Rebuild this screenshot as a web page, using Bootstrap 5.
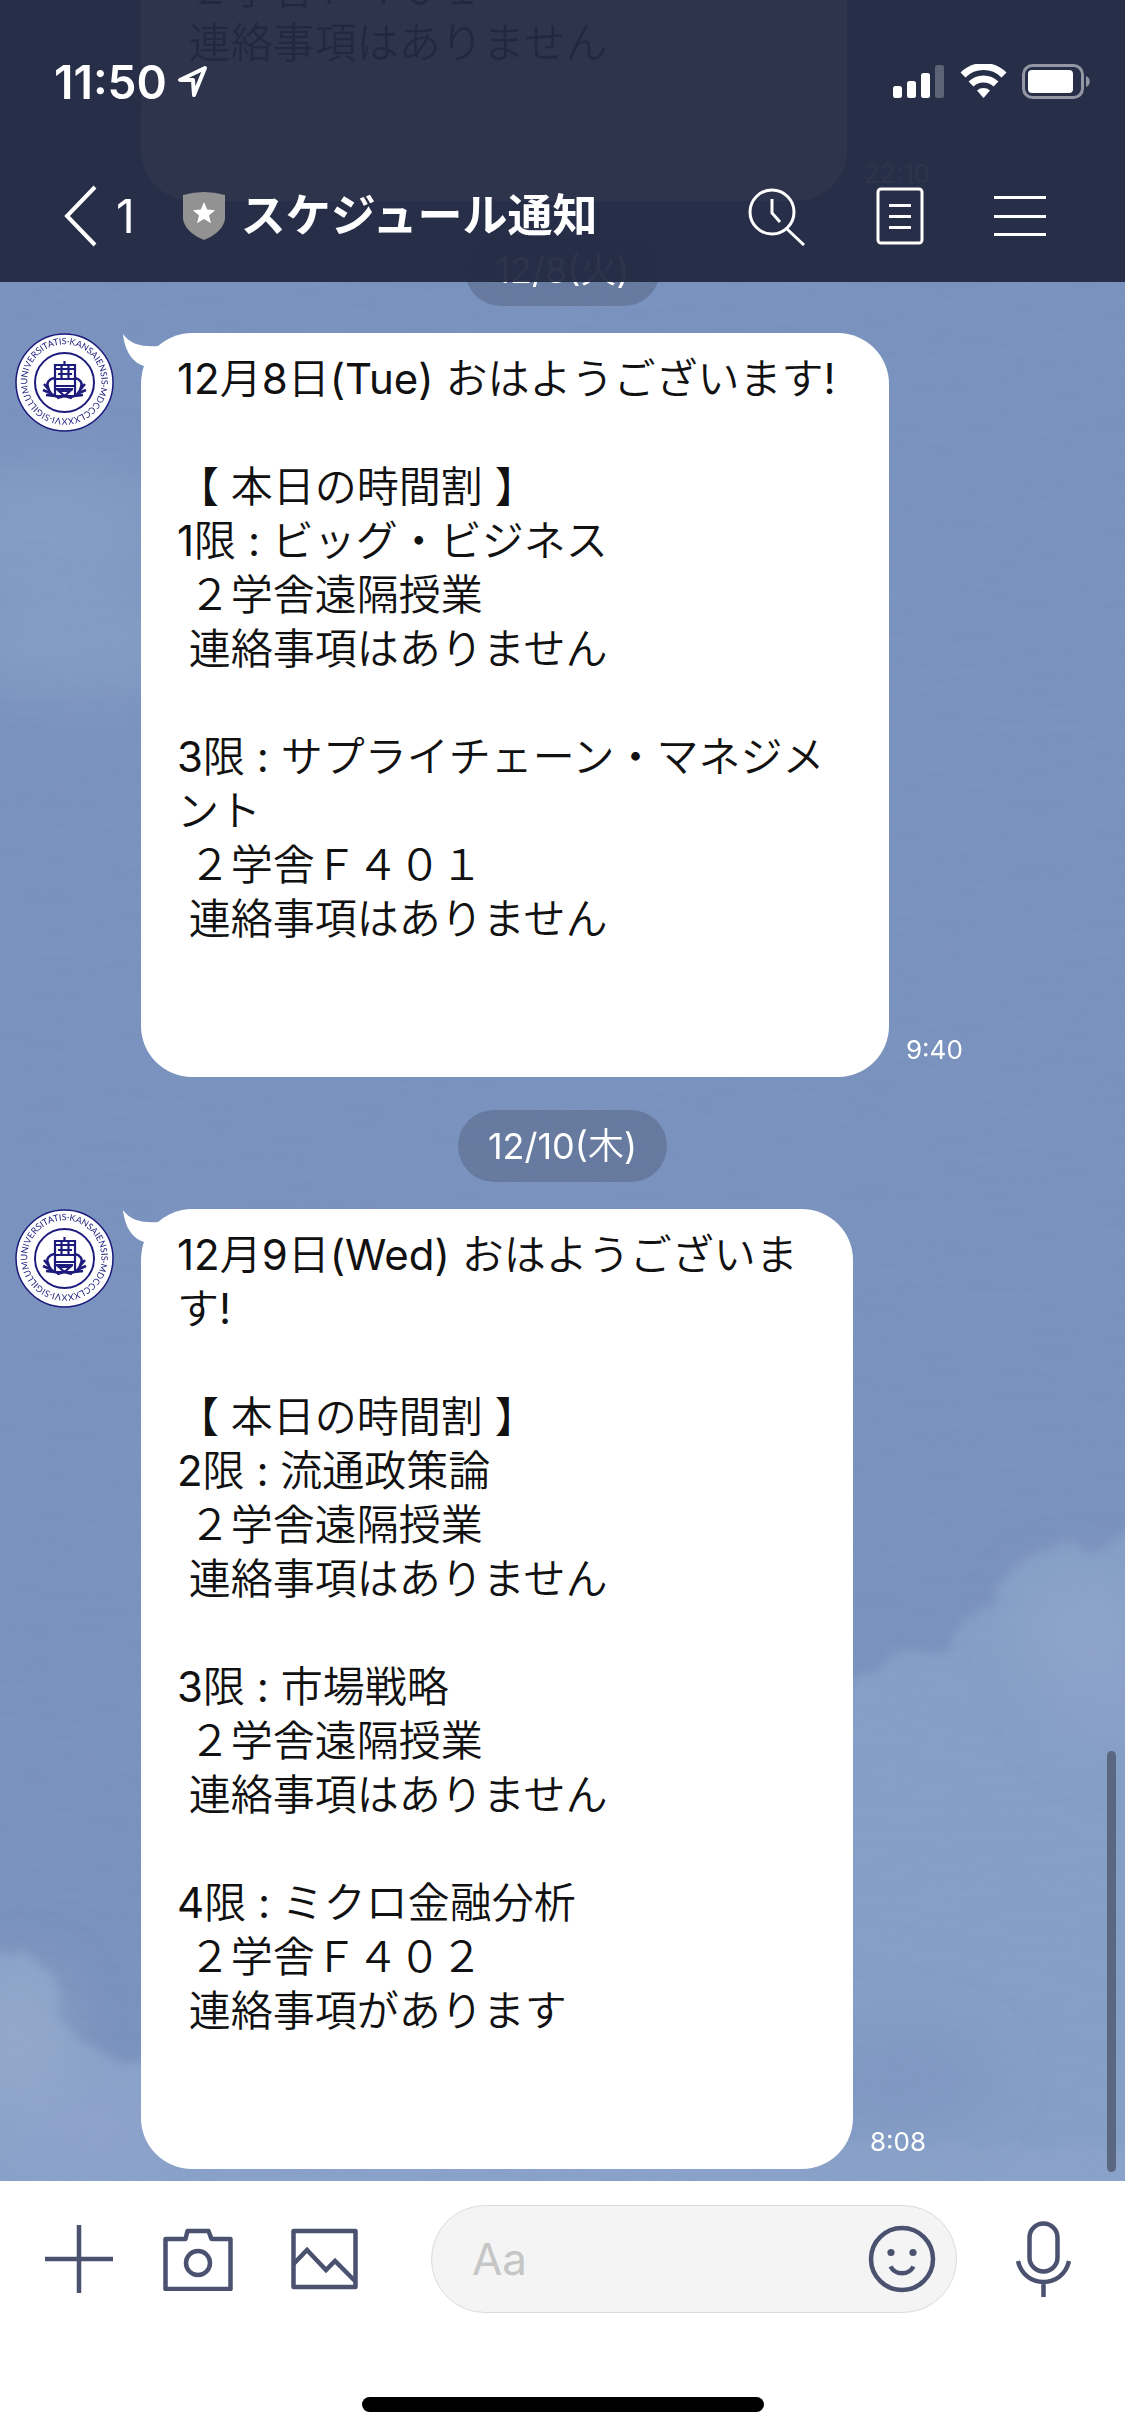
<!DOCTYPE html>
<html lang="ja">
<head>
<meta charset="utf-8">
<meta name="viewport" content="width=device-width, initial-scale=1">
<title>スケジュール通知</title>
<link href="https://cdn.jsdelivr.net/npm/bootstrap@5.3.0/dist/css/bootstrap.min.css" rel="stylesheet">
<style>
  :root { --ink: #4a5270; --sky: #7a92be; --ui: Inter, "Noto Sans CJK JP", sans-serif; --thin: Inter, "Noto Sans CJK JP DemiLight", "Noto Sans CJK JP", sans-serif; }
  body { font-family: var(--ui); background: #fff; }
  svg { display: block; flex-shrink: 0; }
  .app { height: 100vh; }

  /* header: status row and title row over the scrolled chat */
  .topbar { background: rgba(35, 42, 66, .954); height: 282px; padding: 47px 34px 0 54px; z-index: 3; }
  .status { height: 70px; gap: 10px; }
  .clock { font-size: 46px; font-weight: 600; line-height: 70px; }
  .titlerow { height: 100px; margin-top: 49px; padding-left: 10px; padding-right: 45px; }
  .titlerow a, .titlerow button { color: #fff; background: none; border: 0; padding: 0; }
  .unread { font-size: 46px; line-height: 56px; }
  .chat-title { font-size: 45px; line-height: 56px; font-weight: 700; color: #fff; }
  .actions { gap: 70px; }

  /* chat */
  .chat { background: var(--sky); min-height: 0; padding-bottom: 12px; }
  .sky { z-index: 0; }
  .msg { gap: 27px; padding-left: 15px; z-index: 1; }
  .bubble { font-family: var(--thin); background: #fff; color: #111; border-radius: 51px; padding: 19px 36px 23px; font-size: 42px; line-height: 54px; white-space: pre-wrap; line-break: strict; }
  .bubble-sm { width: 706px; }
  .bubble-md { max-width: 712px; }
  .bubble-lg { max-width: 748px; }
  .tail { left: -18px; top: 0; }
  .stamp { font-size: 26px; line-height: 30px; color: #fff; margin-left: -10px; padding-bottom: 12px; }
  .daypill { font-family: var(--thin); background: rgba(84, 98, 128, .5); color: #fff; font-size: 36px; line-height: 72px; padding: 0 30px; border-radius: 36px; margin: 33px 0 27px; z-index: 1; }
  .thumb { right: 9px; bottom: 9px; width: 9px; height: 421px; border-radius: 5px; background: #5a6781; z-index: 2; }

  /* composer */
  .composer { padding: 24px 0; height: 255px; }
  .composer form { padding: 0 54px 0 45px; }
  .composer button { background: none; border: 0; padding: 0; }
  .tools { gap: 50px; }
  .field { background: #f4f4f4; border: 1px solid #dcdcdc; border-radius: 54px; height: 108px; padding: 0 20px 0 40px; margin-left: 73px; margin-right: 59px; min-width: 0; }
  .field input { border: 0; background: none; font-size: 44px; width: 0; min-width: 0; outline: 0; padding: 0; }
  .field input::placeholder { color: #c6c6c6; opacity: 1; }
  .homebar { width: 402px; height: 15px; border-radius: 8px; background: #000; }
</style>
</head>
<body>
<svg width="0" height="0" class="position-absolute" aria-hidden="true">
  <defs>
    <path id="ringpath" d="M12.500 51.500A37 37 0 1 1 12.600 52.500"/>
    <symbol id="seal" viewBox="0 0 99 99">
      <circle cx="49.5" cy="49.5" r="48.5" fill="#fff" stroke="#1d1b7c" stroke-width="1.5"/>
      <circle cx="49.5" cy="49.5" r="29.5" fill="#fff" stroke="#1d1b7c" stroke-width="2"/>
      <text fill="#1d1b7c" font-family="Lato, sans-serif" font-size="9"><textPath href="#ringpath">UNIVERSITATIS·KANSAIENSIS·MDCCCLXXXVI·SIGILLUM·</textPath></text>
      <g fill="none" stroke="#1d1b7c" stroke-width="2">
        <path d="M40 32h20v14H40zM46.500 32v14M53.500 32v14M40 36h20M43 41h14M49.500 28v4M40 47v6h20v-6M41 56h17M44 58h11l-5.500 5zM40 53v10h20V53" stroke-width="2.200"/>
        <path d="M39 45c-5 1-8 5-6 9 1 5 4 9 10 10M60 45c5 1 8 5 6 9-1 5-4 9-10 10M29 51l5 6M28 57l7 3M31 62l9 1M70 51l-5 6M71 57l-7 3M68 62l-9 1M42 65l7.500-2 7.500 2" stroke-width="2.500"/>
      </g>
    </symbol>
    <symbol id="tailshape" viewBox="0 0 48 40"><path d="M0 1C8 12 20 14 35 13L48 8V40L19 40 21 33C11 30 2 20 0 1Z" fill="#fff"/></symbol>
  </defs>
</svg>

<div class="app d-flex flex-column overflow-hidden position-relative">
  <header class="topbar position-absolute top-0 start-0 w-100">
    <div class="status d-flex align-items-center text-white">
      <span class="clock">11:50</span>
      <svg width="32" height="34" viewBox="0 0 32 34" fill="none" stroke="#fff" stroke-width="4" stroke-linejoin="round"><path d="M28 3L3 15h13l1 15z"/></svg>
      <svg class="ms-auto" width="198" height="36" viewBox="0 0 198 36" fill="#fff">
        <rect x="0" y="22" width="9" height="12" rx="2.500"/><rect x="14" y="17" width="9" height="17" rx="2.500"/><rect x="28" y="9" width="9" height="25" rx="2.500"/><rect x="42" y="1" width="9" height="33" rx="2.500" opacity=".25"/>
        <g fill="none" stroke="#fff" stroke-width="7"><path d="M70 11a29 29 0 0 1 41 0"/><path d="M78 20a18 18 0 0 1 25 0"/></g>
        <path d="M84 26.500a10 10 0 0 1 13 0L90.500 34z"/>
        <rect x="130.500" y="1.500" width="59" height="32" rx="9" fill="none" stroke="#fff" stroke-width="3" opacity=".5"/>
        <rect x="135" y="6" width="45" height="23" rx="4"/><path d="M193 12c5 2 5 9 0 11z" opacity=".5"/>
      </svg>
    </div>
    <div class="titlerow d-flex align-items-center">
      <a href="#" class="d-flex align-items-center text-decoration-none" aria-label="戻る">
        <svg width="36" height="64" viewBox="0 0 36 64" fill="none" stroke="#fff" stroke-width="4"><path d="M31 3L3 32l28 29"/></svg>
        <span class="unread ms-3">1</span>
      </a>
      <svg class="ms-5" width="42" height="48" viewBox="0 0 42 48"><path d="M0 3Q21-3 42 3V27Q40 40 21 48 2 40 0 27z" fill="#929292"/><path d="M21 10l3.200 7.600 7.800.6-6 5.200 2 7.800-7-4.200-7 4.200 2-7.800-6-5.200 7.800-.6z" fill="#fff"/></svg>
      <h1 class="chat-title mb-0 ms-3">スケジュール通知</h1>
      <div class="actions d-flex align-items-center ms-auto">
        <button type="button" aria-label="検索"><svg width="58" height="60" viewBox="0 0 58 60" fill="none" stroke="#fff" stroke-width="3"><circle cx="24" cy="26" r="22"/><path d="M24 13v14l8 9M39 43l17 16"/></svg></button>
        <button type="button" aria-label="ノート"><svg width="48" height="58" viewBox="0 0 48 58" fill="none" stroke="#fff" stroke-width="3"><rect x="2" y="2" width="44" height="54" rx="3"/><path d="M13 18.500h22M13 29.500h22M13 40.500h22"/></svg></button>
        <button type="button" aria-label="メニュー"><svg width="52" height="40" viewBox="0 0 52 40" fill="none" stroke="#fff" stroke-width="3"><path d="M0 1.500h52M0 20.500h52M0 38.500h52"/></svg></button>
      </div>
    </div>
  </header>

  <main class="chat flex-fill d-flex flex-column justify-content-end position-relative overflow-hidden">
    <svg class="sky position-absolute top-0 start-0 w-100 h-100" viewBox="0 0 1125 2181" preserveAspectRatio="xMidYMax slice" aria-hidden="true">
      <defs>
        <filter id="soft" x="-10%" y="-10%" width="120%" height="120%"><feTurbulence type="fractalNoise" baseFrequency=".03" numOctaves="3" seed="4" result="n"/><feDisplacementMap in="SourceGraphic" in2="n" scale="26"/><feGaussianBlur stdDeviation="4"/></filter>
        <filter id="haze" x="-40%" y="-40%" width="180%" height="180%"><feGaussianBlur stdDeviation="28"/></filter>
        <filter id="grain" x="0" y="0" width="100%" height="100%"><feTurbulence type="fractalNoise" baseFrequency=".012 .12" numOctaves="2" seed="7"/><feColorMatrix values="0 0 0 0 .3  0 0 0 0 .42  0 0 0 0 .65  .5 0 0 0 -.14"/></filter>
      </defs>
      <g filter="url(#haze)" fill="#88a3c8" opacity=".65"><ellipse cx="50" cy="530" rx="120" ry="70"/><ellipse cx="80" cy="645" rx="130" ry="50"/></g>
      <g filter="url(#soft)">
        <path d="M800 1700L890 1658 950 1640 958 1616 992 1602 1004 1570 1036 1550 1062 1541 1094 1550 1112 1536 1160 1528V2220H800z" fill="#859fc6"/>
        <path d="M-40 1946L24 1950 52 1975 62 2000 66 2028 92 2046 112 2062 160 2058 400 2120 1160 2150V2230H-40z" fill="#8aa2c9"/>
      </g>
      <g filter="url(#haze)"><ellipse cx="1085" cy="1630" rx="65" ry="55" fill="#93a6ca" opacity=".7"/><ellipse cx="1110" cy="1700" rx="60" ry="50" fill="#90a2cd" opacity=".6"/><ellipse cx="20" cy="2040" rx="45" ry="70" fill="#97aacb" opacity=".8"/><ellipse cx="95" cy="2130" rx="70" ry="35" fill="#90a2cd" opacity=".8"/><ellipse cx="900" cy="2080" rx="90" ry="50" fill="#7d94c0" opacity=".7"/></g>
      <rect width="1125" height="2181" filter="url(#grain)" opacity=".3"/>
    </svg>

    <div class="msg d-flex align-items-end position-relative">
      <svg class="align-self-start" width="99" height="99" aria-hidden="true"></svg>
      <div class="bubble bubble-sm"> ２学舎Ｆ４０１
 連絡事項はありません

&#8203;</div>
      <time class="stamp">22:10</time>
    </div>

    <div class="daypill align-self-center">12/8(火)</div>

    <div class="msg d-flex align-items-end position-relative">
      <svg class="align-self-start" width="99" height="99" role="img" aria-label="関西大学"><use href="#seal"/></svg>
      <div class="bubble bubble-lg position-relative"><svg class="tail position-absolute" width="48" height="40"><use href="#tailshape"/></svg>12月8日(Tue) おはようございます!

【 本日の時間割 】
1限 : ビッグ・ビジネス
 ２学舎遠隔授業
 連絡事項はありません

3限 : サプライチェーン・マネジメント
 ２学舎Ｆ４０１
 連絡事項はありません

&#8203;</div>
      <time class="stamp">9:40</time>
    </div>

    <div class="daypill align-self-center">12/10(木)</div>

    <div class="msg d-flex align-items-end position-relative">
      <svg class="align-self-start" width="99" height="99" role="img" aria-label="関西大学"><use href="#seal"/></svg>
      <div class="bubble bubble-md position-relative"><svg class="tail position-absolute" width="48" height="40"><use href="#tailshape"/></svg>12月9日(Wed) おはようございます!

【 本日の時間割 】
2限 : 流通政策論
 ２学舎遠隔授業
 連絡事項はありません

3限 : 市場戦略
 ２学舎遠隔授業
 連絡事項はありません

4限 : ミクロ金融分析
 ２学舎Ｆ４０２
 連絡事項があります

&#8203;</div>
      <time class="stamp">8:08</time>
    </div>
    <div class="thumb position-absolute"></div>
  </main>

  <footer class="composer bg-white d-flex flex-column flex-shrink-0 justify-content-between">
    <form class="d-flex align-items-center">
      <div class="tools d-flex align-items-center">
        <button type="button" aria-label="追加"><svg width="68" height="68" viewBox="0 0 68 68" stroke="#4a5270" stroke-width="4.500"><path d="M34 0v68M0 34h68"/></svg></button>
        <button type="button" aria-label="カメラ"><svg width="70" height="64" viewBox="0 0 70 64" fill="none" stroke="#4a5270" stroke-width="4.500" stroke-linejoin="round"><path d="M2.500 12h20l2-8h21l3 8h19v50h-65z"/><circle cx="35" cy="36" r="12"/></svg></button>
        <button type="button" class="ms-2" aria-label="画像"><svg width="67" height="62" viewBox="0 0 67 62" fill="none" stroke="#4a5270" stroke-width="4.500"><path stroke-linejoin="round" d="M2.500 3h62v56h-62z"/><path d="M2.500 36L16 22l19 20 9-9 20 20"/></svg></button>
      </div>
      <div class="field d-flex align-items-center flex-fill">
        <input type="text" class="flex-fill" placeholder="Aa" aria-label="メッセージを入力">
        <button type="button" aria-label="スタンプ"><svg width="68" height="68" viewBox="0 0 68 68" fill="none" stroke="#4a5270" stroke-width="4.500"><circle cx="34" cy="34" r="31"/><path d="M22.500 41.500c5 9 18 9 23 0"/><g fill="#4a5270" stroke="none"><circle cx="23" cy="27.500" r="3.600"/><circle cx="45" cy="27.500" r="3.600"/></g></svg></button>
      </div>
      <button type="button" aria-label="音声"><svg width="55" height="76" viewBox="0 0 55 76" fill="none" stroke="#4a5270" stroke-width="4.500"><rect x="13.500" y="2.500" width="28" height="48" rx="14"/><path d="M2 40c6 28 45 28 51 0M27.500 61v15"/></svg></button>
    </form>
    <div class="homebar align-self-center"></div>
  </footer>
</div>
<script src="https://cdn.jsdelivr.net/npm/bootstrap@5.3.0/dist/js/bootstrap.bundle.min.js"></script>
</body>
</html>
